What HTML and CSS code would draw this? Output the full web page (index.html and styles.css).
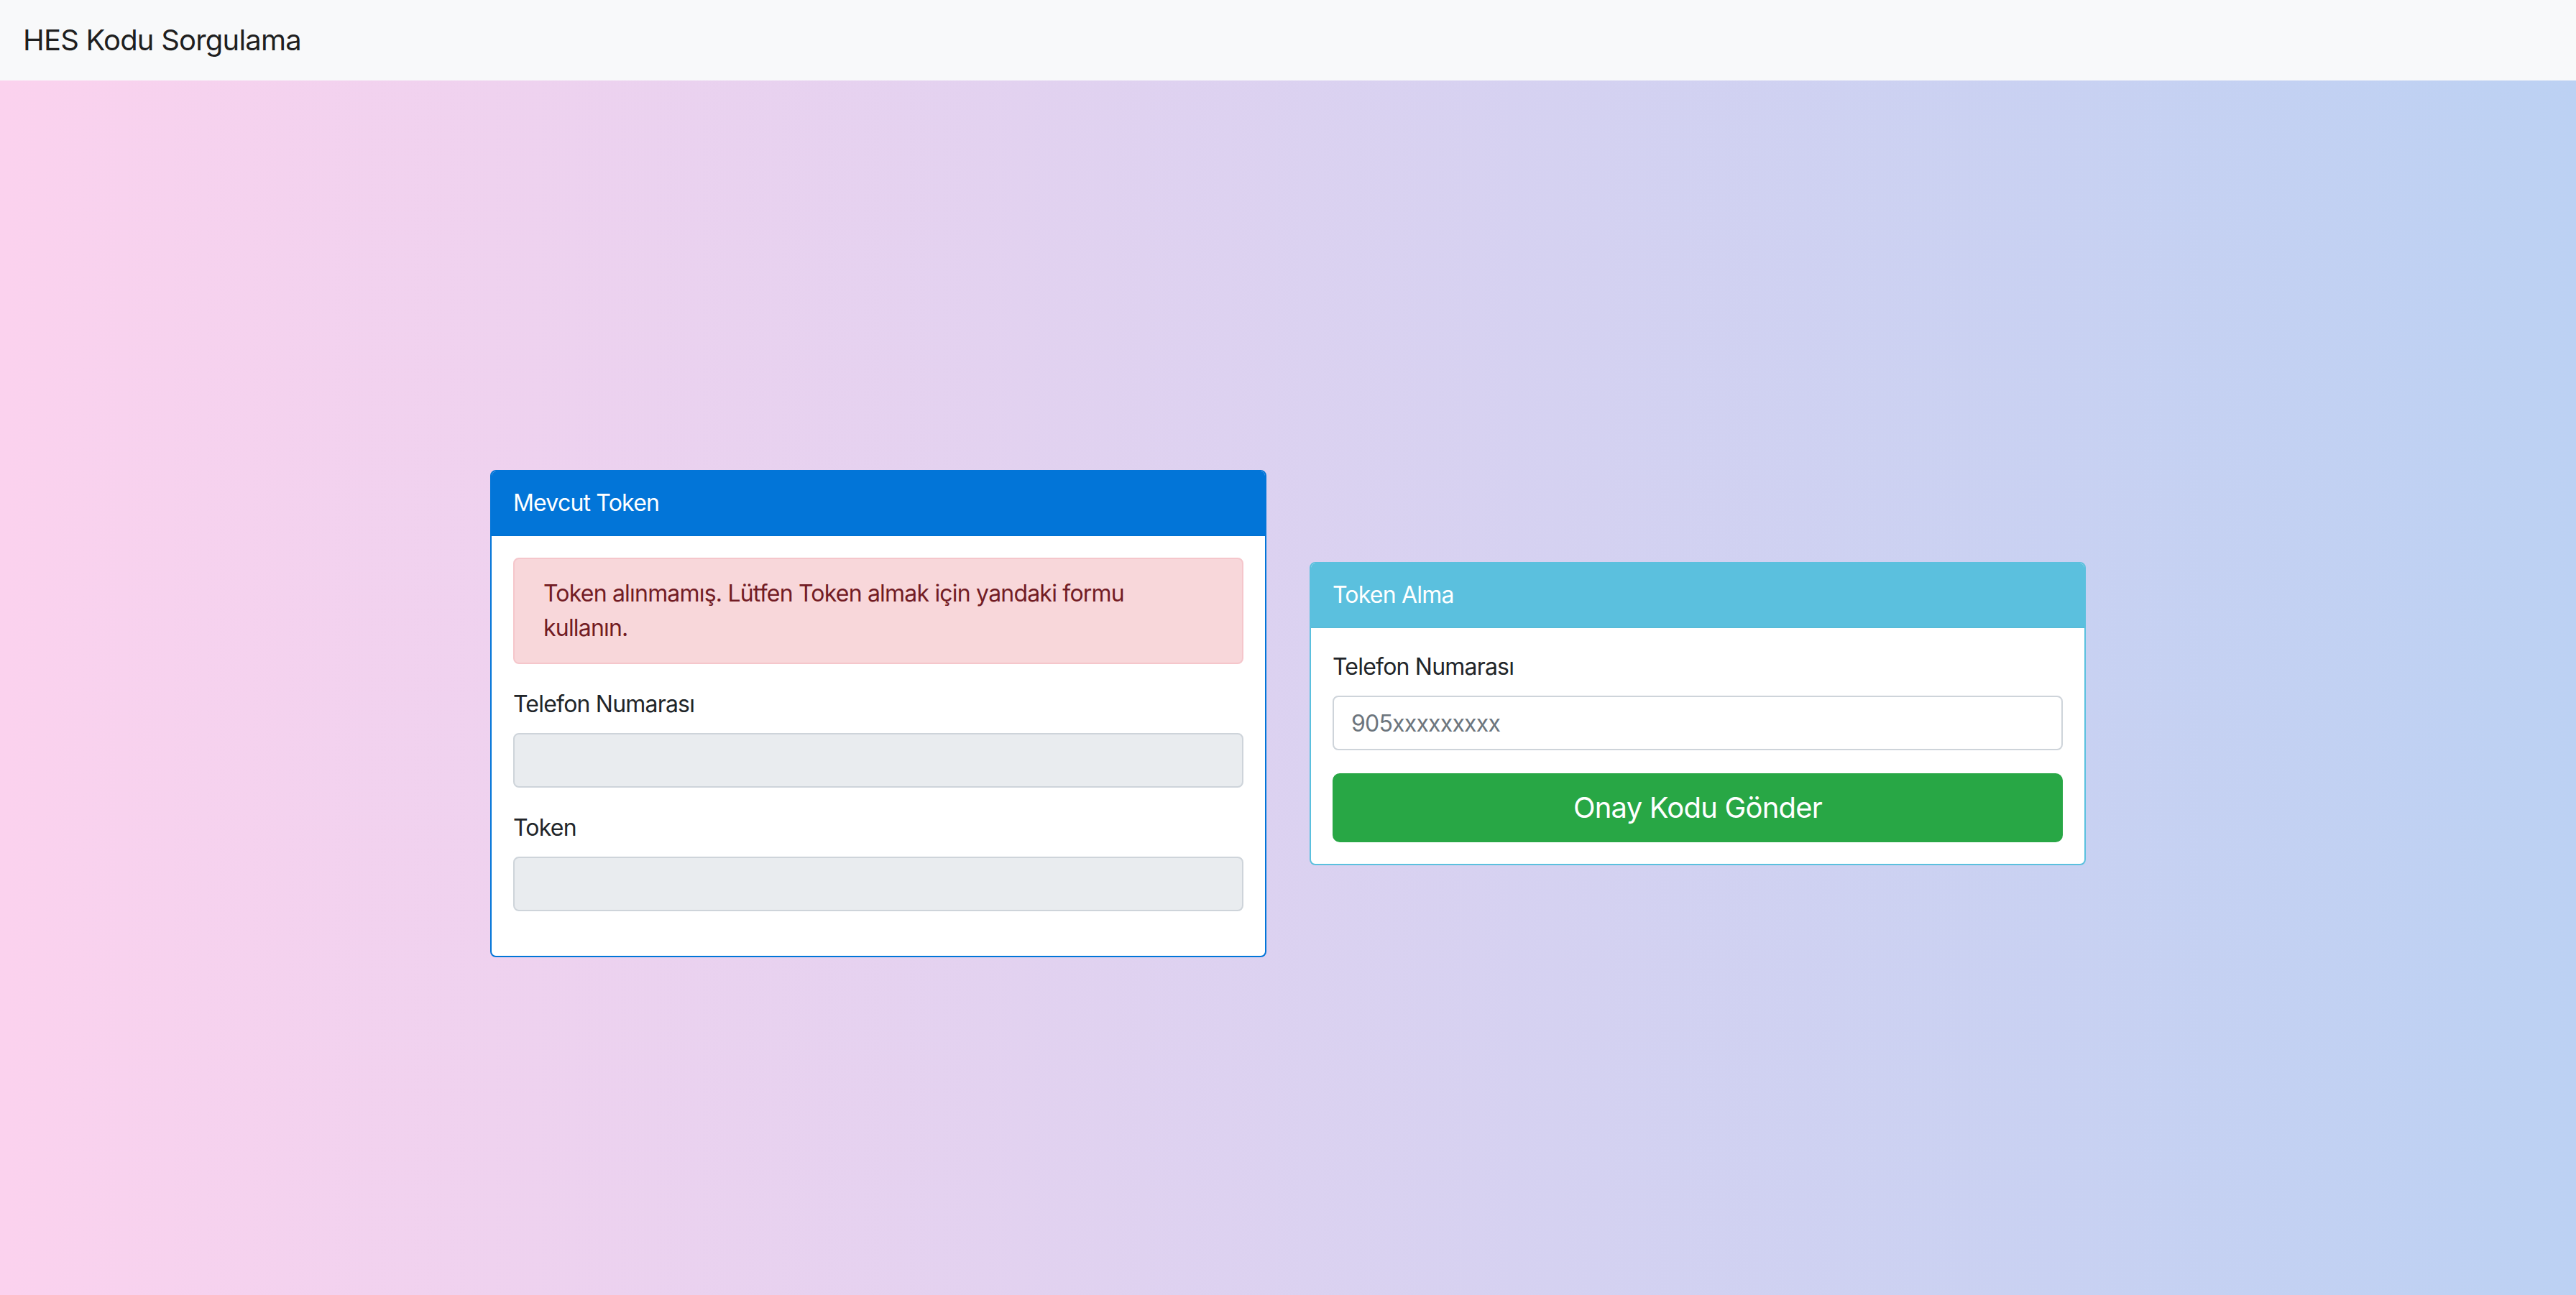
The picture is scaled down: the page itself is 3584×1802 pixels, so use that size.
FILE: index.html
```html
<!DOCTYPE html>
<html lang="tr">
<head>
<meta charset="utf-8">
<title>HES Kodu Sorgulama</title>
<link rel="stylesheet" href="styles.css">
</head>
<body>
<nav class="navbar">
  <span class="brand">HES Kodu Sorgulama</span>
</nav>
<main class="page">
  <div class="container">
    <div class="row">
      <div class="col">
        <div class="card card-primary">
          <div class="card-header">Mevcut Token</div>
          <div class="card-body">
            <div class="alert">Token alınmamış. Lütfen Token almak için yandaki formu kullanın.</div>
            <div class="form-group">
              <label class="label">Telefon Numarası</label>
              <input class="form-control" type="text" disabled>
            </div>
            <div class="form-group">
              <label class="label">Token</label>
              <input class="form-control" type="text" disabled>
            </div>
          </div>
        </div>
      </div>
      <div class="col">
        <div class="card card-info">
          <div class="card-header">Token Alma</div>
          <div class="card-body">
            <div class="form-group">
              <label class="label">Telefon Numarası</label>
              <input class="form-control" type="text" placeholder="905xxxxxxxxx">
            </div>
            <button class="btn-success" type="button">Onay Kodu Gönder</button>
          </div>
        </div>
      </div>
    </div>
  </div>
</main>
</body>
</html>
```

FILE: styles.css
```css
* { box-sizing: border-box; }
html, body { margin: 0; height: 100%; }
body {
  font-family: Inter, "Noto Sans", "Liberation Sans", sans-serif;
  font-size: 32px;
  line-height: 1.5;
  letter-spacing: -0.025em;
  color: #212529;
  background: linear-gradient(90deg, #fbd2ee 0%, #bcd1f3 100%);
  min-height: 1802px;
}
.navbar {
  background: #f8f9fa;
  height: 112px;
  padding: 16px 32px;
  display: flex;
  align-items: center;
}
.brand {
  font-size: 40px;
  line-height: 60px;
  color: rgba(0,0,0,0.9);
}
.page { padding-top: 542px; }
.container {
  width: 2280px;
  margin: 0 auto;
}
.row {
  display: flex;
  align-items: center;
}
.col {
  flex: 0 0 50%;
  padding: 0 30px;
}
.card {
  background: #fff;
  border: 2px solid;
  border-radius: 8px;
  overflow: hidden;
}
.card-primary { border-color: #0275d8; }
.card-info { border-color: #5bc0de; }
.card-header {
  padding: 20px 30px;
  line-height: 48px;
  color: #fff;
  border-bottom: 2px solid rgba(0,0,0,0.02);
}
.card-primary .card-header { background: #0275d8; }
.card-info .card-header { background: #5bc0de; }
.card-body { padding: 30px; }
.alert {
  background: #f8d7da;
  border: 2px solid #f5c6cb;
  color: #721c24;
  border-radius: 8px;
  padding: 24px 40px;
  margin-bottom: 32px;
}
.form-group { margin-bottom: 32px; }
.label {
  display: block;
  margin-bottom: 16px;
  line-height: 48px;
}
.form-control {
  display: block;
  width: 100%;
  height: 76px;
  padding: 12px 24px;
  font-family: inherit;
  font-size: 32px;
  line-height: 48px;
  letter-spacing: inherit;
  color: #495057;
  background: #fff;
  border: 2px solid #ced4da;
  border-radius: 8px;
  outline: none;
}
.form-control::placeholder { color: #6c757d; }
.form-control:disabled { background: #e9ecef; }
.btn-success {
  display: block;
  width: 100%;
  height: 96px;
  font-family: inherit;
  font-size: 40px;
  line-height: 60px;
  letter-spacing: inherit;
  padding: 16px 32px;
  color: #fff;
  background: #28a745;
  border: 2px solid #28a745;
  border-radius: 10px;
  cursor: pointer;
}
```
